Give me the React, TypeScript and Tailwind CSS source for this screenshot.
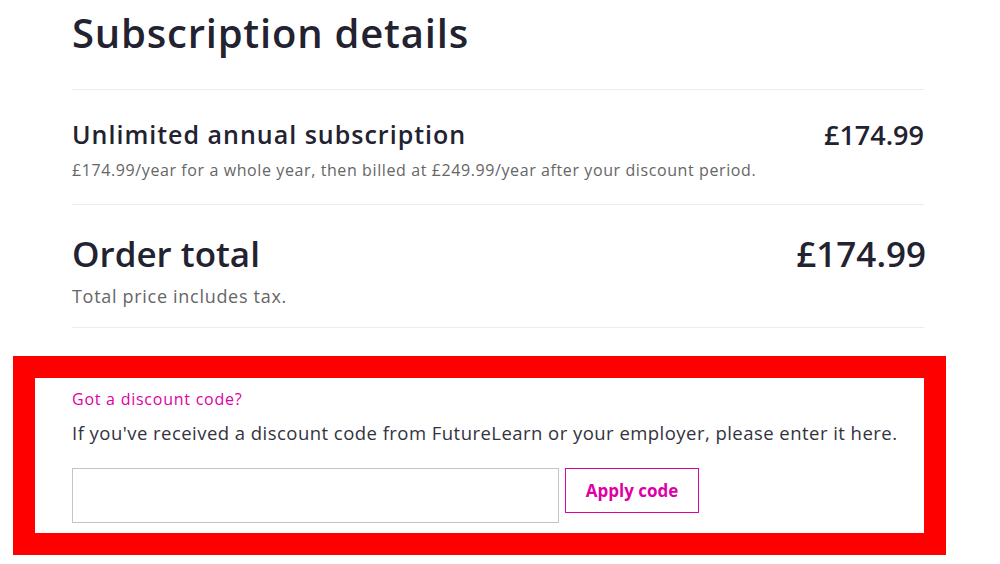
import React from "react";

export default function App() {
  const font = { fontFamily: "'Open Sans', Lato, Arial, sans-serif" };
  return (
    <div className="w-[1000px] h-[564px] bg-white overflow-hidden text-[#222230]" style={font}>
      <div className="ml-[72px] w-[852px]">
        <div className="h-[90px] border-b border-[#ececec] pt-[7px]">
          <h1 className="text-[40px] leading-[52px] font-semibold tracking-[0.8px]">Subscription details</h1>
        </div>
        <div className="h-[115px] border-b border-[#ececec] pt-[27px] flex justify-between">
          <div>
            <div className="text-[25px] leading-[34px] font-semibold tracking-[1px]">Unlimited annual subscription</div>
            <div className="text-[16px] leading-[22px] text-[#666] mt-[8px] tracking-[0.6px]">
              £174.99/year for a whole year, then billed at £249.99/year after your discount period.
            </div>
          </div>
          <div className="text-[27px] leading-[34px] font-semibold mt-[1px]">£174.99</div>
        </div>
        <div className="h-[123px] border-b border-[#ececec] pt-[27px] flex justify-between">
          <div>
            <div className="text-[35px] leading-[44px] font-semibold">Order total</div>
            <div className="text-[18px] leading-[24px] text-[#666] mt-[8px] tracking-[0.7px]">Total price includes tax.</div>
          </div>
          <div className="text-[35px] leading-[44px] font-semibold mr-[-2px]">£174.99</div>
        </div>
      </div>
      <div className="mt-[28px] ml-[13px] w-[933px] h-[199px] border-[22px] border-[#ff0000] bg-white pl-[37px]">
        <div className="pt-[10px] text-[16px] leading-[22px] text-[#de00a5] tracking-[0.75px]">Got a discount code?</div>
        <div className="mt-[10px] text-[18.5px] leading-[26px] text-[#333340] tracking-[0.46px]">
          If you've received a discount code from FutureLearn or your employer, please enter it here.
        </div>
        <div className="mt-[22px] flex items-start gap-[6px]">
          <input className="w-[487px] h-[55px] border border-[#c4c4c4] outline-none" />
          <button className="w-[134px] h-[45px] border border-[#de00a5] text-[#de00a5] text-[17px] font-bold bg-white">
            Apply code
          </button>
        </div>
      </div>
    </div>
  );
}
